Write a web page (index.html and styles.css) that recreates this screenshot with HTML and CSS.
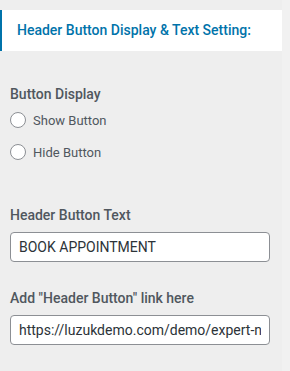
FILE: index.html
```html
<!DOCTYPE html>
<html lang="en">
<head>
  <meta charset="UTF-8" />
  <meta name="viewport" content="width=device-width, initial-scale=1.0"/>
  <title>Header Button Settings</title>
  <link rel="stylesheet" href="styles.css">
</head>
<body>
  <div class="panel">
    <div class="section-title">Header Button Display &amp; Text Setting:</div>

    <div class="field field-radios">
      <div class="field-label">Button Display</div>
      <label class="radio"><input type="radio" name="display"> Show Button</label>
      <label class="radio"><input type="radio" name="display"> Hide Button</label>
    </div>

    <div class="field field-text">
      <div class="field-label">Header Button Text</div>
      <input class="text-input" type="text" value="BOOK APPOINTMENT">
    </div>

    <div class="field field-link">
      <div class="field-label">Add "Header Button" link here</div>
      <input class="text-input" type="text" value="https://luzukdemo.com/demo/expert-n">
    </div>
  </div>
  <div class="scroll-strip"></div>
</body>
</html>
```

FILE: styles.css
```css
body {
  font-family: Roboto, "Noto Sans", sans-serif;
  background: #eeeeee;
  margin: 0;
  display: flex;
  height: 100vh;
  overflow: hidden;
}
.panel {
  width: 282px;
  padding-top: 10px;
}
.scroll-strip {
  width: 8px;
  background: #f1f1f1;
}
.section-title {
  background: #fff;
  border-left: 2px solid #0073aa;
  color: #0073aa;
  font-size: 14px;
  font-weight: 500;
  height: 41px;
  line-height: 41px;
  padding-left: 15px;
}
.field {
  padding: 0 12px 0 10px;
}
.field-radios {
  margin-top: 33px;
}
.field-text {
  margin-top: 43px;
}
.field-link {
  margin-top: 26px;
}
.field-label {
  color: #50575e;
  font-size: 14px;
  font-weight: 500;
  line-height: 20px;
  margin-bottom: 7px;
}
.field-radios .field-label {
  margin-bottom: 6px;
}
.radio {
  display: flex;
  align-items: center;
  gap: 7px;
  color: #50575e;
  font-size: 13px;
  height: 20px;
  margin-bottom: 12px;
}
.radio input {
  appearance: none;
  width: 16px;
  height: 16px;
  margin: 0;
  border: 1px solid #8c8f94;
  border-radius: 50%;
  background: #fff;
}
.text-input {
  display: block;
  box-sizing: border-box;
  width: 260px;
  height: 30px;
  border: 1px solid #8c8f94;
  border-radius: 4px;
  padding: 0 8px;
  font-family: Roboto, "Noto Sans", sans-serif;
  font-size: 14px;
  color: #2c3338;
  background: #fff;
}
```
